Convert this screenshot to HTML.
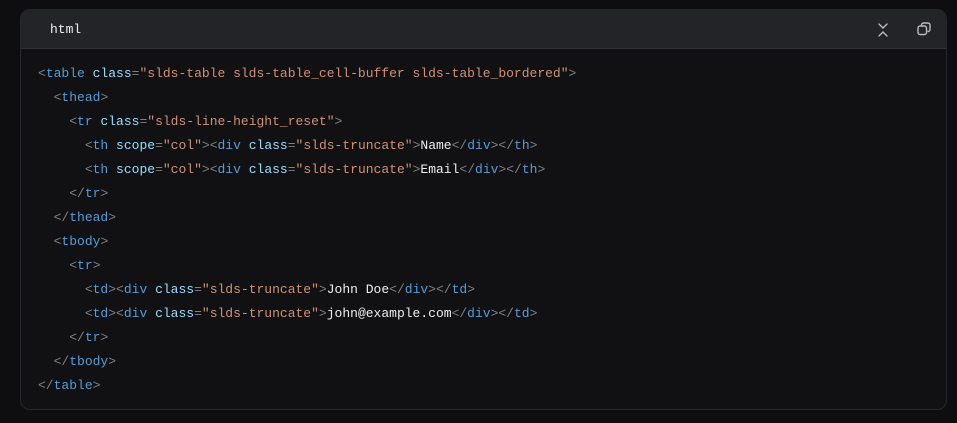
<!DOCTYPE html>
<html><head><style>
html,body{margin:0;padding:0;background:#0e0e10;width:957px;height:423px;overflow:hidden}
.box{position:absolute;left:20px;top:9px;width:925px;height:399px;border:1px solid #26272a;border-radius:10px;background:#111113;overflow:hidden}
.hd{height:38px;background:#232427;border-bottom:1px solid #313236;position:relative}
.hd span{position:absolute;left:29px;top:12px;font:13px "Liberation Mono",monospace;color:#eee}
pre{margin:0;position:absolute;left:17px;top:52px;font:13px/24px "Liberation Mono",monospace;color:#eee}
.p{color:#808080}.t{color:#569cd6}.a{color:#9cdcfe}.s{color:#ce9178}
svg{position:absolute}
</style></head><body>
<div class="box">
<div class="hd"><span>html</span>
<svg style="left:856px;top:12px" width="12" height="16" viewBox="0 0 12 16" fill="none" stroke="#bbb" stroke-width="1.4" stroke-linecap="round"><path d="M2 2l4 4 4-4M2 14l4-4 4 4"/></svg>
<svg style="left:896px;top:12px" width="14" height="14" viewBox="0 0 14 14" fill="none" stroke="#bbb" stroke-width="1.4"><rect x="1" y="4" width="8.5" height="8.5" rx="2"/><path d="M4.5 3.5V3a2 2 0 0 1 2-2H11a2 2 0 0 1 2 2v4.5a2 2 0 0 1-2 2h-.5"/></svg>
</div>
<pre><span class="p">&lt;</span><span class="t">table</span> <span class="a">class</span><span class="p">=</span><span class="s">"slds-table slds-table_cell-buffer slds-table_bordered"</span><span class="p">&gt;</span>
  <span class="p">&lt;</span><span class="t">thead</span><span class="p">&gt;</span>
    <span class="p">&lt;</span><span class="t">tr</span> <span class="a">class</span><span class="p">=</span><span class="s">"slds-line-height_reset"</span><span class="p">&gt;</span>
      <span class="p">&lt;</span><span class="t">th</span> <span class="a">scope</span><span class="p">=</span><span class="s">"col"</span><span class="p">&gt;&lt;</span><span class="t">div</span> <span class="a">class</span><span class="p">=</span><span class="s">"slds-truncate"</span><span class="p">&gt;</span>Name<span class="p">&lt;/</span><span class="t">div</span><span class="p">&gt;&lt;/</span><span class="t">th</span><span class="p">&gt;</span>
      <span class="p">&lt;</span><span class="t">th</span> <span class="a">scope</span><span class="p">=</span><span class="s">"col"</span><span class="p">&gt;&lt;</span><span class="t">div</span> <span class="a">class</span><span class="p">=</span><span class="s">"slds-truncate"</span><span class="p">&gt;</span>Email<span class="p">&lt;/</span><span class="t">div</span><span class="p">&gt;&lt;/</span><span class="t">th</span><span class="p">&gt;</span>
    <span class="p">&lt;/</span><span class="t">tr</span><span class="p">&gt;</span>
  <span class="p">&lt;/</span><span class="t">thead</span><span class="p">&gt;</span>
  <span class="p">&lt;</span><span class="t">tbody</span><span class="p">&gt;</span>
    <span class="p">&lt;</span><span class="t">tr</span><span class="p">&gt;</span>
      <span class="p">&lt;</span><span class="t">td</span><span class="p">&gt;&lt;</span><span class="t">div</span> <span class="a">class</span><span class="p">=</span><span class="s">"slds-truncate"</span><span class="p">&gt;</span>John Doe<span class="p">&lt;/</span><span class="t">div</span><span class="p">&gt;&lt;/</span><span class="t">td</span><span class="p">&gt;</span>
      <span class="p">&lt;</span><span class="t">td</span><span class="p">&gt;&lt;</span><span class="t">div</span> <span class="a">class</span><span class="p">=</span><span class="s">"slds-truncate"</span><span class="p">&gt;</span>john@example.com<span class="p">&lt;/</span><span class="t">div</span><span class="p">&gt;&lt;/</span><span class="t">td</span><span class="p">&gt;</span>
    <span class="p">&lt;/</span><span class="t">tr</span><span class="p">&gt;</span>
  <span class="p">&lt;/</span><span class="t">tbody</span><span class="p">&gt;</span>
<span class="p">&lt;/</span><span class="t">table</span><span class="p">&gt;</span></pre>
</div>
</body></html>
